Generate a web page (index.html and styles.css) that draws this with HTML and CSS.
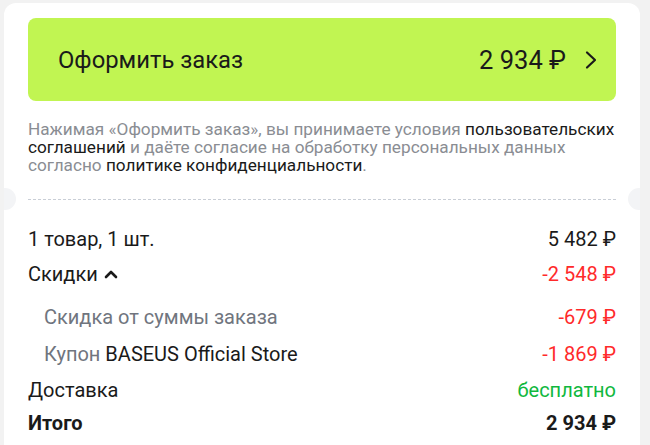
FILE: index.html
```html
<!DOCTYPE html>
<html lang="ru">
<head>
<meta charset="utf-8">
<link rel="stylesheet" href="styles.css">
</head>
<body>
<div class="card">
  <div class="top">
    <button class="checkout">
      <span class="checkout-label">Оформить заказ</span>
      <span class="checkout-right">
        <span class="checkout-price">2 934 ₽</span>
        <svg class="chev" width="14" height="20" viewBox="0 0 14 20"><path d="M3 2.5 L11 10 L3 17.5" fill="none" stroke="#1a1a1a" stroke-width="2.2" stroke-linecap="round" stroke-linejoin="round"/></svg>
      </span>
    </button>
    <p class="legal">Нажимая «Оформить заказ», вы принимаете условия <a>пользовательских соглашений</a> и даёте согласие на обработку персональных данных согласно <a>политике конфиденциальности</a>.</p>
  </div>
  <div class="divider"><span class="notch left"></span><span class="dash"></span><span class="notch right"></span></div>
  <div class="summary">
    <div class="row"><span>1 товар, 1 шт.</span><span>5 482 ₽</span></div>
    <div class="row"><span class="toggle">Скидки <svg width="16" height="12" viewBox="0 0 16 12"><path d="M3 9 L8 4 L13 9" fill="none" stroke="#1a1a1a" stroke-width="2.6" stroke-linecap="round" stroke-linejoin="round"/></svg></span><span class="red">-2 548 ₽</span></div>
    <div class="sub">
      <div class="row sub-row"><span class="muted">Скидка от суммы заказа</span><span class="red">-679 ₽</span></div>
      <div class="row sub-row"><span><span class="muted">Купон</span> BASEUS Official Store</span><span class="red">-1 869 ₽</span></div>
    </div>
    <div class="row"><span>Доставка</span><span class="green">бесплатно</span></div>
    <div class="row total"><span>Итого</span><span>2 934 ₽</span></div>
  </div>
</div>
</body>
</html>
```
FILE: styles.css
```css
* { box-sizing: border-box; }
html, body { margin: 0; padding: 0; }
body {
  background: #f2f2f2;
  font-family: Roboto, "Noto Sans", sans-serif;
  color: #1a1a1a;
  width: 650px;
  height: 445px;
  overflow: hidden;
  padding: 3px 10px 0 4px;
}
.card {
  background: #fff;
  border-radius: 12px 12px 0 0;
  height: 460px;
  overflow: hidden;
}
.top { padding: 15px 24px 0 24px; }
.checkout {
  width: 100%;
  height: 83px;
  border: 0;
  border-radius: 8px;
  background: #c1f552;
  display: flex;
  align-items: center;
  justify-content: space-between;
  padding: 0 18px 0 30px;
  font-family: inherit;
  color: #1a1a1a;
  font-size: 23.8px;
}
.checkout-right { display: flex; align-items: center; gap: 18px; }
.checkout-price { font-size: 25.5px; }
.chev { display: block; }
.legal {
  margin: 19px -6px 0 0;
  font-size: 17.2px;
  line-height: 18px;
  color: #8a8d93;
}
.legal a { color: #1a1a1a; }
.divider {
  display: flex;
  align-items: center;
  height: 24px;
  margin-top: 13px;
}
.notch {
  width: 12px;
  height: 22px;
  background: #f3f4f6;
  flex: none;
}
.notch.left { border-radius: 0 11px 11px 0; }
.notch.right { border-radius: 11px 0 0 11px; }
.dash {
  flex: 1;
  margin: 0 12px;
  border-top: 1px dashed #c9ced6;
}
.summary { padding: 10px 24px 0 24px; font-size: 20px; }
.row {
  display: flex;
  justify-content: space-between;
  align-items: center;
  height: 35px;
}
.toggle { display: flex; align-items: center; gap: 5px; }
.sub { padding: 7px 0 0 16px; }
.sub-row { height: 37px; }
.muted { color: #70757e; }
.red { color: #ff2a2a; }
.green { color: #10b83e; }
.total { font-weight: 700; height: 32px; }
```
